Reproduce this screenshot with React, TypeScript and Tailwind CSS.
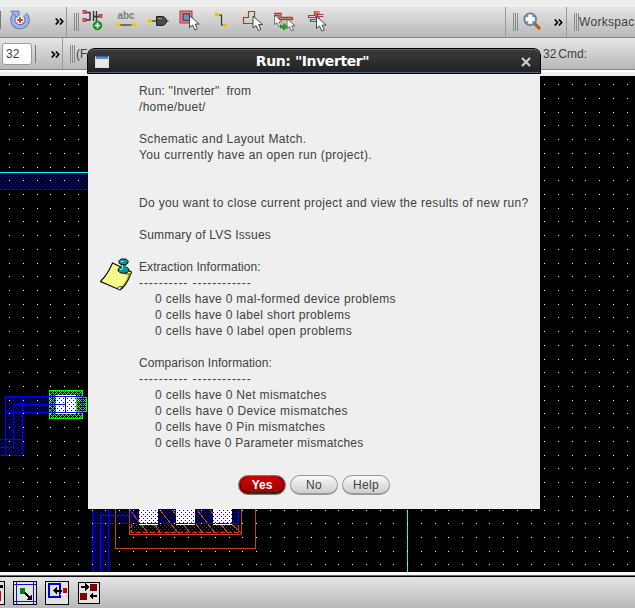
import React from "react";

const range = (n: number) => Array.from({ length: n }, (_, i) => i);

type Line = { text: string; track?: string };

const W0 = "tracking-[0.2px]";
const ITEM = "pl-4 tracking-[0.31px]";

const LINES: Line[] = [
  { text: 'Run: "Inverter"  from', track: "tracking-[0.17px]" },
  { text: "/home/buet/", track: "tracking-[0.3px]" },
  { text: "" },
  { text: "Schematic and Layout Match.", track: "tracking-[0.35px]" },
  { text: "You currently have an open run (project).", track: "tracking-[0.39px]" },
  { text: "" },
  { text: "" },
  { text: "Do you want to close current project and view the results of new run?", track: "tracking-[0.33px]" },
  { text: "" },
  { text: "Summary of LVS Issues" },
  { text: "" },
  { text: "Extraction Information:", track: "tracking-[0.07px]" },
  { text: "---------- ------------", track: "tracking-[0.93px]" },
  { text: "0 cells have 0 mal-formed device problems", track: ITEM },
  { text: "0 cells have 0 label short problems", track: ITEM },
  { text: "0 cells have 0 label open problems", track: "pl-4 tracking-[0.36px]" },
  { text: "" },
  { text: "Comparison Information:", track: "tracking-[0.07px]" },
  { text: "---------- ------------", track: "tracking-[0.93px]" },
  { text: "0 cells have 0 Net mismatches", track: ITEM },
  { text: "0 cells have 0 Device mismatches", track: "pl-4 tracking-[0.38px]" },
  { text: "0 cells have 0 Pin mismatches", track: ITEM },
  { text: "0 cells have 0 Parameter mismatches", track: "pl-4 tracking-[0.24px]" },
];

function Pointer({ x, y }: { x: number; y: number }) {
  return (
    <path
      transform={`translate(${x} ${y})`}
      d="M0 0 L0 12 L3 9.5 L5.4 14.5 L7.8 13.4 L5.6 8.6 L9.6 8.6 Z"
      fill="#fff"
      stroke="#444"
      strokeWidth="1"
    />
  );
}

function Grip() {
  return (
    <div className="flex h-[18px] w-[5px] shrink-0 justify-between">
      <i className="w-px bg-[#8a8a8a]" />
      <i className="w-px bg-[#8a8a8a]" />
      <i className="w-px bg-[#8a8a8a]" />
    </div>
  );
}

function More() {
  return (
    <svg width="9" height="7" viewBox="0 0 9 7" className="shrink-0" fill="none" stroke="#000" strokeWidth="1.7">
      <path d="M0.7 0.5 L3.5 3.5 L0.7 6.5 M4.9 0.5 L7.7 3.5 L4.9 6.5" />
    </svg>
  );
}

function RefreshIcon() {
  return (
    <svg width="20" height="20" viewBox="0 0 20 20" className="shrink-0">
      <path d="M4.5 5 A7.2 7.2 0 1 0 15 4.5" fill="none" stroke="#50669a" strokeWidth="5" />
      <path d="M0.8 1.2 L9 1.2 L9 9 Z" fill="#9db4e4" stroke="#50669a" strokeWidth="0.8" />
      <path d="M4.5 5 A7.2 7.2 0 1 0 15 4.5" fill="none" stroke="#9db4e4" strokeWidth="3.4" />
      <path d="M10 6.5 V13.5 M6.5 10 H13.5" stroke="#fff" strokeWidth="4" />
      <path d="M10 7.2 V12.8 M7.2 10 H12.8" stroke="#e03c20" strokeWidth="2" />
    </svg>
  );
}

function InstanceIcon() {
  return (
    <svg width="22" height="22" viewBox="0 0 22 22">
      <path d="M3 2.5 H8 V8 M3 10 H8 V8 M11.5 1 V11 M11 6.5 H19 M14.5 1 V11" fill="none" stroke="#333" strokeWidth="1.4" />
      <g fill="#d96a6a" stroke="#b03030" strokeWidth="0.8">
        <rect x="1" y="0.5" width="3" height="3" />
        <rect x="1" y="8.5" width="3" height="3" />
        <rect x="17" y="4.5" width="3" height="3" />
      </g>
      <circle cx="15.5" cy="15.5" r="4.3" fill="#18961c" stroke="#0b7010" strokeWidth="0.7" />
      <path d="M15.5 12.8 V18.2 M12.8 15.5 H18.2" stroke="#fff" strokeWidth="1.6" />
    </svg>
  );
}

function LabelIcon() {
  return (
    <div className="flex w-[22px] flex-col items-center">
      <span className="h-[10px] font-['Liberation_Sans',sans-serif] text-[10px] leading-[8px] font-bold text-[#7c7c7c]">abc</span>
      <svg width="22" height="6" viewBox="0 0 22 6">
        <path d="M3 3 H19" stroke="#333" strokeWidth="1.2" />
        <rect x="1" y="1" width="4" height="4" fill="#e2c010" stroke="#f6e478" strokeWidth="0.5" />
        <rect x="17" y="1" width="4" height="4" fill="#e2c010" stroke="#f6e478" strokeWidth="0.5" />
      </svg>
    </div>
  );
}

function PinIcon() {
  return (
    <svg width="22" height="12" viewBox="0 0 22 12">
      <path d="M3 6 H21.5" stroke="#333" strokeWidth="1.2" />
      <rect x="0.5" y="4" width="4" height="4" fill="#e2c010" stroke="#f6e478" strokeWidth="0.5" />
      <path d="M9.5 1.5 H15 A4.5 4.5 0 0 1 15 10.5 H9.5 Z" fill="#4a4a4a" stroke="#222" />
      <path d="M11 3.5 H15" stroke="#999" />
    </svg>
  );
}

function SelectIcon() {
  return (
    <svg width="22" height="22" viewBox="0 0 22 22">
      <rect x="1" y="1" width="12" height="12" fill="#e98080" stroke="#b03434" />
      <rect x="4" y="3.8" width="6.5" height="6.5" fill="#7c8cc0" stroke="#26345f" />
      <Pointer x={10.5} y={5.5} />
    </svg>
  );
}

function WireIcon() {
  return (
    <svg width="14" height="16" viewBox="0 0 14 16">
      <path d="M3 3 H7.5 V13 H11" fill="none" stroke="#333" strokeWidth="1.2" />
      <rect x="0.8" y="0.8" width="3.8" height="3.8" fill="#e2c010" stroke="#f6e478" strokeWidth="0.5" />
      <rect x="9.6" y="11.4" width="3.8" height="3.8" fill="#e2c010" stroke="#f6e478" strokeWidth="0.5" />
    </svg>
  );
}

function ShapeIcon() {
  return (
    <svg width="22" height="22" viewBox="0 0 22 22">
      <path d="M1.5 12.5 V6.5 H6.5 V0.5 H12.5 V12.5 Z" fill="none" stroke="#b83434" strokeWidth="1.2" />
      <Pointer x={11} y={5} />
    </svg>
  );
}

function MoveNetIcon() {
  return (
    <svg width="22" height="22" viewBox="0 0 22 22">
      <path d="M1 2.5 H8 V6.5 H19.5 M1 4.5 H6 V8.500 H19.5 V6.5" fill="none" stroke="#b83434" strokeWidth="1.3" />
      <g transform="translate(1.5 4) scale(.8)" opacity=".85"><Pointer x={0} y={0} /></g>
      <g transform="translate(14 7.5) scale(.85)" opacity=".85"><Pointer x={0} y={0} /></g>
      <path d="M7.5 14.5 H10.5 V12.2 L14.5 15.700 L10.5 19.2 V17 H7.5 Z" fill="#25a51c" stroke="#13700e" strokeWidth="0.6" />
    </svg>
  );
}

function NetIcon() {
  return (
    <svg width="20" height="22" viewBox="0 0 20 22">
      <path
        d="M12.5 0.8 H7.5 V4.5 H1.5 V6.5 H9 V2.8 H12.5 M16.5 3.5 H10.500 V8.500 H3.500 V10.500 H9 M16.5 5.500 H12 V8"
        fill="none"
        stroke="#b83434"
        strokeWidth="1.2"
      />
      <Pointer x={9.5} y={5.5} />
    </svg>
  );
}

function ZoomIcon() {
  return (
    <svg width="18" height="18" viewBox="0 0 18 18" className="shrink-0">
      <path d="M11.5 11.5 L16 16" stroke="#b4621a" strokeWidth="3.2" strokeLinecap="round" />
      <circle cx="7.2" cy="7.2" r="6" fill="#7fa6d8" stroke="#66788f" strokeWidth="1.4" />
      <path d="M7.2 2.600 V11.800 M2.600 7.2 H11.800" stroke="#fff" strokeWidth="3.8" />
    </svg>
  );
}

function LayoutCanvas() {
  return (
    <svg width="635" height="496" viewBox="0 76 635 496" className="block bg-black" shapeRendering="crispEdges" fill="none">
      <defs>
        <pattern id="blueDots" width="8" height="4" patternUnits="userSpaceOnUse">
          <path d="M1 0h1v1h-1z M5 2h1v1h-1z" fill="#0000ff" />
        </pattern>
        <pattern id="blueTight" width="4" height="4" patternUnits="userSpaceOnUse">
          <path d="M1 0h1v1h-1z M3 2h1v1h-1z" fill="#0000ff" />
        </pattern>
        <pattern id="greenMesh" width="4" height="4" patternUnits="userSpaceOnUse">
          <path d="M0 0h1v1h-1z M1 1h1v1h-1z M2 2h1v1h-1z M3 1h1v1h-1z M1 3h1v1h-1z M3 3h1v1h-1z" fill="#00ff00" />
        </pattern>
        <pattern id="redDots" width="4" height="4" patternUnits="userSpaceOnUse">
          <path d="M0 1h1v1h-1z M2 3h1v1h-1z" fill="#a02818" />
        </pattern>
      </defs>

      {/* power rail */}
      <rect x="0" y="173" width="88" height="16" fill="url(#blueTight)" />
      <rect x="0" y="172" width="88" height="1" fill="#00ffff" />
      <rect x="0" y="189" width="88" height="1" fill="#0000ff" />

      {/* contact and routed metal */}
      <rect x="49.5" y="390.5" width="33" height="28" fill="url(#greenMesh)" stroke="#00ff00" />
      <rect x="76.5" y="397.5" width="10" height="14" fill="url(#greenMesh)" stroke="#00ff00" />
      <rect x="56" y="395" width="20" height="19" fill="#fff" />
      <path d="M5 396h51v16h-34v43h-22v-16h5z M56 397h20v15h-20z" fill="url(#blueTight)" />
      <path
        d="M5.5 455 V396.5 H82.5 V412.5 H5.5 M13.5 447.5 V404.5 H65.5 M65.5 397 V412 M22.5 396 V455.5 H0 M0 439.5 H22 M0 447.5 H13.5"
        stroke="#0000ff"
      />

      {/* device at the lower edge */}
      <rect x="92" y="509" width="16" height="63" fill="url(#blueTight)" />
      <rect x="108" y="509" width="130" height="14" fill="url(#blueTight)" />
      <rect x="130" y="523" width="110" height="10" fill="url(#redDots)" />
      <g stroke="#c04428">
        {[128, 141, 158, 170, 183, 195, 208, 221].map((x) => (
          <path key={x} d={`M${x + 2} ${x === 221 ? 516 : 510} L${x + 20} 533`} />
        ))}
        <path d="M115.5 509 V548.5 H255.5 V509 M129.5 509 V534.5 H241.5 V509" />
      </g>
      <path d="M131.5 509 V532.5 H238.5 V509" stroke="#f02818" strokeDasharray="5 2" />
      {[139, 176, 213].map((x) => (
        <g key={x}>
          <rect x={x} y="509" width="19" height="16" fill="#fff" />
          <rect x={x} y="509" width="19" height="14" fill="url(#blueTight)" />
        </g>
      ))}
      <path d="M92.5 509 V572 M100.5 572 V515.5 H130.5 M108.5 509 V572 M92 523.5 H238.5 V509 M131.5 509 V523" stroke="#0000ff" />
      <rect x="407" y="510" width="1" height="62" fill="#00ffff" />

      {/* snap grid */}
      <g fill="#fff">
        {range(36).map((r) =>
          range(46).map((c) => (
            <rect key={`${r}-${c}`} x={Math.floor(9.7 + 13.72 * c)} y={Math.floor(84.7 + 13.72 * r)} width="1" height="1" />
          )),
        )}
      </g>
    </svg>
  );
}

function NoteIcon() {
  return (
    <svg width="34" height="34" viewBox="0 0 34 34" className="block">
      <defs>
        <pattern id="paper" width="2" height="2" patternUnits="userSpaceOnUse">
          <rect width="2" height="2" fill="#ffff30" />
          <path d="M0 0h1v1h-1z M1 1h1v1h-1z" fill="#ffffe0" />
        </pattern>
      </defs>
      <path d="M12.5 5 L31.5 14 C29 21 26 28 20 32 L0.5 23.5 C6 18 10 11 12.5 5Z" fill="url(#paper)" stroke="#000" strokeWidth="1.1" />
      <path d="M31 15 C28 22 25 28 19 31.5 C19 29 19.5 28 22 28 C26 24 28 19 29 15Z" fill="#8a8a20" />
      <path d="M17.5 31 L18 29 L22 28.5 L20 32Z" fill="#fff" stroke="#000" strokeWidth="0.6" />
      <path d="M24 15 h5 v2 h-3z" fill="#99992a" />
      <g fill="#0a9496" stroke="#000" strokeWidth="1">
        <ellipse cx="23.5" cy="12" rx="5.5" ry="3.3" />
        <rect x="21" y="5" width="5" height="7" stroke="none" />
        <ellipse cx="23.5" cy="3.800" rx="4.6" ry="2.900" />
      </g>
      <path d="M20.5 3.5 h3 M20 11.5 h2 M22.5 7 v4" stroke="#6ff" />
    </svg>
  );
}

function BottomIcons() {
  return (
    <div className="flex h-6 items-center">
      <svg width="5" height="24" viewBox="19 0 5 24" shapeRendering="crispEdges">
        <rect x="0.5" y="0.5" width="23" height="23" fill="#e2e2e2" stroke="#000" />
        <rect x="15" y="4" width="7" height="3" fill="#000" />
        <rect x="15" y="10" width="5" height="10" fill="#c00000" />
      </svg>
      <svg width="24" height="24" viewBox="0 0 24 24" className="ml-2" shapeRendering="crispEdges">
        <rect x="0.5" y="0.5" width="23" height="23" fill="#e2e2e2" stroke="#000" />
        <path d="M3.5 1 V23 M20.5 1 V23 M1 3.5 H23 M1 20.5 H23" stroke="#1111bb" />
        <rect x="7" y="7" width="5" height="6" fill="#008000" />
        <path d="M12 12 L17 17" stroke="#000" strokeWidth="2" />
        <path d="M19 13 V19 H13Z" fill="#000" />
      </svg>
      <svg width="24" height="24" viewBox="0 0 24 24" className="ml-2" shapeRendering="crispEdges">
        <rect x="0.5" y="0.5" width="23" height="23" fill="#e2e2e2" stroke="#000" />
        <rect x="4" y="3" width="11" height="13" fill="#ddd" stroke="#0000cc" strokeWidth="2" />
        <path d="M8 9.5 L12 5.5 V8.5 H17 V10.5 H12 V13.5Z" fill="#000" />
        <rect x="18" y="7" width="4" height="5" fill="#d00000" />
        <rect x="15" y="13" width="6" height="1" fill="#fff" />
      </svg>
      <svg width="22" height="22" viewBox="0 0 22 22" className="ml-[9px]" shapeRendering="crispEdges">
        <rect x="0.5" y="0.5" width="21" height="21" fill="#e2e2e2" stroke="#000" />
        <rect x="12" y="2" width="7" height="7" fill="#800000" />
        <rect x="2" y="11" width="7" height="7" fill="#800000" />
        <path d="M3 4h4v-3l4 4l-4 4v-3h-4z M19 13h-4v-3l-4 4l4 4v-3h4z" fill="#000" />
      </svg>
    </div>
  );
}

const bar = "bg-linear-to-b from-[#e6e6e6] to-[#b8b8b8]";
const label = "font-['Liberation_Sans',sans-serif] text-[12px] text-[#404040]";

export default function App() {
  return (
    <div className="relative flex h-[608px] w-[635px] flex-col overflow-hidden bg-[#efefef]">
      <div className="h-[7px] shrink-0" />

      <div className={`flex h-[31px] shrink-0 border-b border-[#858585] ${bar}`}>
        <div className="flex w-[67px] shrink-0 items-center border-r border-[#999] pb-1">
          <i className="h-[18px] w-px bg-[#777]" />
          <div className="ml-[9px]"><RefreshIcon /></div>
          <div className="mt-[3px] ml-[25px]"><More /></div>
        </div>
        <div className="flex w-[439px] shrink-0 border-r border-[#999] pl-[7px]">
          <div className="mt-[6px]"><Grip /></div>
          <div className="mt-[3px] ml-[3px]"><InstanceIcon /></div>
          <div className="mt-[5px] ml-[11px]"><LabelIcon /></div>
          <div className="mt-[8px] ml-[10px]"><PinIcon /></div>
          <div className="mt-[3px] ml-[10px]"><SelectIcon /></div>
          <div className="mt-[5px] ml-[13px]"><WireIcon /></div>
          <div className="mt-[4px] ml-[14px]"><ShapeIcon /></div>
          <div className="mt-[4px] ml-[9px]"><MoveNetIcon /></div>
          <div className="mt-[4px] ml-[12px]"><NetIcon /></div>
        </div>
        <div className="flex w-[61px] shrink-0 border-r border-[#999] pl-[7px]">
          <div className="mt-[6px]"><Grip /></div>
          <div className="mt-[5px] ml-[5px]"><ZoomIcon /></div>
          <div className="mt-[12px] ml-[13px]"><More /></div>
        </div>
        <div className="flex min-w-0 flex-1 pl-[7px]">
          <div className="mt-[6px]"><Grip /></div>
          <span className={`mt-[6px] leading-[18px] tracking-[0.3px] whitespace-nowrap ${label}`}>Workspac</span>
        </div>
      </div>

      <div className={`flex h-[32px] shrink-0 border-b border-[#858585] ${bar}`}>
        <div className="flex w-[63px] shrink-0 border-r border-[#999] pl-[2px]">
          <div className={`mt-[5px] h-[22px] w-[30px] rounded-[3px] border border-[#999] bg-white pl-[3px] leading-[20px] ${label}`}>32</div>
          <i className="mt-[7px] ml-[3px] h-[18px] w-px bg-[#777]" />
          <div className="mt-[13px] ml-[15px]"><More /></div>
        </div>
        <div className="flex min-w-0 flex-1 pl-[7px]">
          <div className="mt-[7px]"><Grip /></div>
          <span className={`mt-[7px] w-[468px] shrink-0 pl-px leading-[18px] ${label}`}>(F</span>
          <span className={`mt-[7px] leading-[18px] ${label}`}>32</span>
          <span className={`mt-[7px] ml-[2px] leading-[18px] ${label}`}>Cmd:</span>
        </div>
      </div>
      <div className="h-[6px] shrink-0 border-t-2 border-white" />

      <div className="h-[496px] shrink-0"><LayoutCanvas /></div>

      <div className="h-[3px] shrink-0 bg-[#f8f8f8]" />
      <div className="h-[2px] shrink-0 border-t border-[#666] bg-black" />
      <div className={`h-[31px] shrink-0 pt-1 ${bar}`}>
        <BottomIcons />
      </div>

      {/* modal window above the editor */}
      <div className="absolute top-[48px] left-[87px] flex h-[461px] w-[454px] flex-col overflow-hidden rounded-t-[7px]">
        <div className="flex h-[26px] shrink-0 items-center rounded-t-[7px] border border-black bg-linear-to-b from-[#3c3c3c] to-[#222] pr-[9px] pl-[7px] shadow-[inset_0_1px_0_#666,inset_0_-1px_0_#4a6084]">
          <div className="mt-px h-[12px] w-[14px] border border-[#d8d8d8] border-t-[#2c62ac] bg-[#e8e8e4] shadow-[inset_0_2px_0_#5a8ccc]" />
          <h1 className="flex-1 pr-[5px] text-center font-['DejaVu_Sans',sans-serif] text-[14px] leading-[24px] font-bold tracking-[-0.42px] whitespace-nowrap text-white">
            Run: "Inverter"
          </h1>
          <svg width="10" height="10" viewBox="0 0 10 10" className="mt-px" stroke="#d0d0d0" strokeWidth="2.2">
            <path d="M1 1 L9 9 M9 1 L1 9" />
          </svg>
        </div>
        <div className="mx-px flex flex-1 flex-col bg-[#efefef]">
          <div className="flex h-[377px] items-start pt-[9px]">
            <div className="mt-[175px] ml-[12px] w-[39px] shrink-0"><NoteIcon /></div>
            <div className={label}>
              {LINES.map((l, i) => (
                <div key={i} className={`h-4 w-max leading-4 whitespace-pre ${l.track ?? W0}`}>{l.text}</div>
              ))}
            </div>
          </div>
          <div className="mt-[24px] ml-[150px] flex gap-1">
            <button className="h-[20px] w-[48px] rounded-full border border-[#777] bg-linear-to-b from-[#d00808] to-[#980000] p-px">
              <span className="flex h-full items-center justify-center rounded-full border border-dotted border-black font-['Liberation_Sans',sans-serif] text-[12px] leading-none font-bold text-white">Yes</span>
            </button>
            <button className={`h-[20px] w-[48px] rounded-full border border-b-2 border-[#999] bg-linear-to-b from-[#fafafa] to-[#cecece] leading-[18px] tracking-[0.3px] ${label}`}>No</button>
            <button className={`h-[20px] w-[48px] rounded-full border border-b-2 border-[#999] bg-linear-to-b from-[#fafafa] to-[#cecece] leading-[18px] tracking-[0.3px] ${label}`}>Help</button>
          </div>
        </div>
      </div>
    </div>
  );
}
